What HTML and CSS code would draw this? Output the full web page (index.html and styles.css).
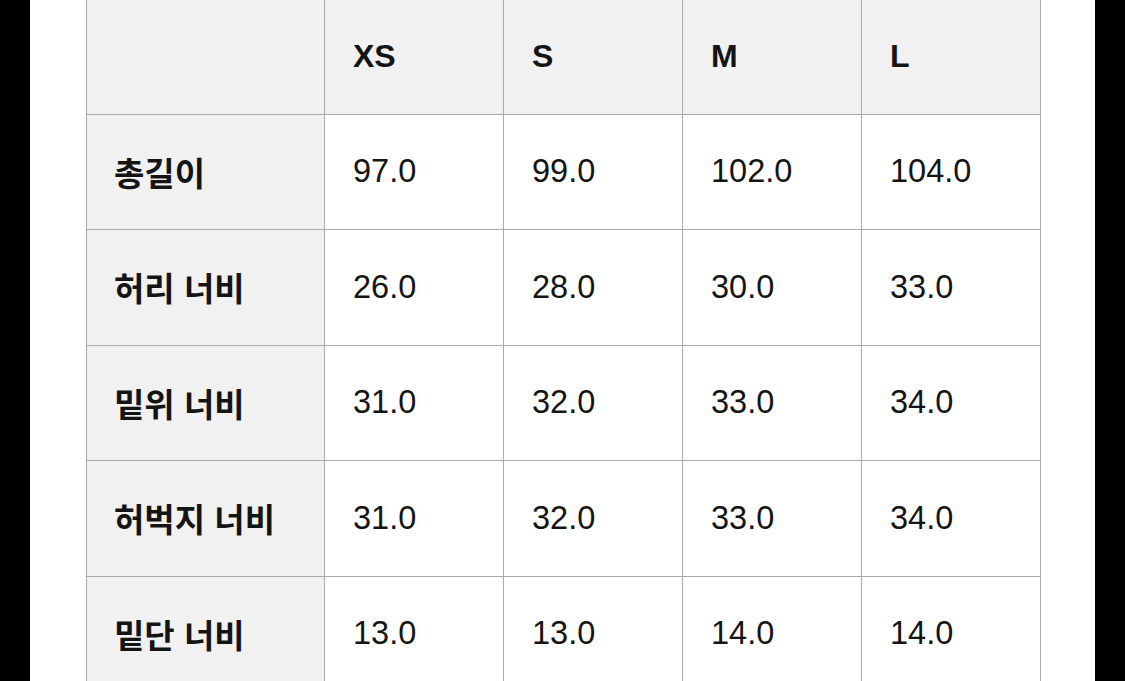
FILE: index.html
```html
<!DOCTYPE html>
<html lang="ko">
<head>
<meta charset="utf-8">
<link rel="stylesheet" href="styles.css">
</head>
<body>
<div class="frame">
  <div class="sheet">
    <table class="size-table">
      <thead>
        <tr>
          <th class="corner"></th>
          <th>XS</th>
          <th>S</th>
          <th>M</th>
          <th>L</th>
        </tr>
      </thead>
      <tbody>
        <tr><th>총길이</th><td>97.0</td><td>99.0</td><td>102.0</td><td>104.0</td></tr>
        <tr><th>허리 너비</th><td>26.0</td><td>28.0</td><td>30.0</td><td>33.0</td></tr>
        <tr><th>밑위 너비</th><td>31.0</td><td>32.0</td><td>33.0</td><td>34.0</td></tr>
        <tr><th>허벅지 너비</th><td>31.0</td><td>32.0</td><td>33.0</td><td>34.0</td></tr>
        <tr><th>밑단 너비</th><td>13.0</td><td>13.0</td><td>14.0</td><td>14.0</td></tr>
      </tbody>
    </table>
  </div>
</div>
</body>
</html>
```

FILE: styles.css
```css
html, body {
  margin: 0;
  padding: 0;
  background: #000;
  height: 100%;
  overflow: hidden;
}

.frame {
  display: flex;
  justify-content: center;
  height: 681px;
  width: 1125px;
  background: #000;
}

.sheet {
  width: 1065px;
  height: 100%;
  background: #fff;
  padding-left: 56px;
  box-sizing: border-box;
  overflow: hidden;
}

.size-table {
  border-collapse: collapse;
  table-layout: fixed;
  margin-top: -2px;
  font-family: "Liberation Sans", "Noto Sans CJK KR", sans-serif;
  font-size: 32.5px;
  color: #141414;
}

.size-table th,
.size-table td {
  border: 1px solid #a9a9a9;
  height: 115.5px;
  padding: 0 0 0 28px;
  text-align: left;
  vertical-align: middle;
  box-sizing: border-box;
  width: 179px;
}

.size-table th.corner,
.size-table tbody th {
  width: 238px;
  padding-left: 27px;
}

.size-table th {
  background: #f1f1f1;
  font-weight: 700;
  font-size: 32px;
}

.size-table tbody th {
  font-family: "Noto Sans CJK KR", sans-serif;
  font-size: 33px;
  font-weight: 700;
  letter-spacing: 0;
}

.size-table td {
  background: #fff;
  font-weight: 400;
}
```
